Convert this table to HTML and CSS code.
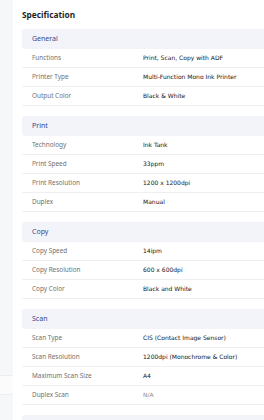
FILE: index.html
```html
<!DOCTYPE html>
<html><head>
<meta charset="utf-8"><link rel="stylesheet" href="styles.css">
</head><body><div class="page">
	<div class="side">
		<div class="side_card"></div>
	</div>
	<div class="spec_wrap">
		<div class="headline">Specification</div>

		<div class="spec_group">
			<div class="ghead">General</div>
			<div class="row"><span class="label">Functions</span><span class="value">Print, Scan, Copy with ADF</span></div>
			<div class="row"><span class="label">Printer Type</span><span class="value">Multi-Function Mono Ink Printer</span></div>
			<div class="row"><span class="label">Output Color</span><span class="value">Black &amp; White</span></div>
		</div>

		<div class="spec_group">
			<div class="ghead">Print</div>
			<div class="row"><span class="label">Technology</span><span class="value">Ink Tank</span></div>
			<div class="row"><span class="label">Print Speed</span><span class="value">33ppm</span></div>
			<div class="row"><span class="label">Print Resolution</span><span class="value">1200 x 1200dpi</span></div>
			<div class="row"><span class="label">Duplex</span><span class="value">Manual</span></div>
		</div>

		<div class="spec_group">
			<div class="ghead">Copy</div>
			<div class="row"><span class="label">Copy Speed</span><span class="value">14ipm</span></div>
			<div class="row"><span class="label">Copy Resolution</span><span class="value">600 x 600dpi</span></div>
			<div class="row"><span class="label">Copy Color</span><span class="value">Black and White</span></div>
		</div>

		<div class="spec_group">
			<div class="ghead">Scan</div>
			<div class="row"><span class="label">Scan Type</span><span class="value">CIS (Contact Image Sensor)</span></div>
			<div class="row"><span class="label">Scan Resolution</span><span class="value">1200dpi (Monochrome &amp; Color)</span></div>
			<div class="row"><span class="label">Maximum Scan Size</span><span class="value">A4</span></div>
			<div class="row"><span class="label">Duplex Scan</span><span class="value muted">N/A</span></div>
		</div>

		<div class="spec_group">
			<div class="ghead"></div>
		</div>
	</div>
</div></body></html>
```

FILE: styles.css
```css
html,body{margin: 0;padding: 0;}
body{background: #f6f7f9;font-family: "Noto Sans", "Open Sans", sans-serif;overflow: hidden;}
.page{display: flex;height: 420px;}
.side{width: 13px;flex: none;padding-top: 375px;}
.side_card{height: 18px;background: #fbfbfc;border-top: 1px solid #eceef2;border-bottom: 1px solid #eceef2;}
.spec_wrap{flex: 1;background: #fff;padding: 8px 0 0 9px;}
.spec_wrap .headline{font-size: 8.3px;font-weight: 700;color: #1f1f1f;height: 14px;line-height: 14px;margin-bottom: 7px;}
.spec_group{margin-bottom: 10px;}
.spec_group .ghead{height: 20px;line-height: 20px;padding-left: 10px;background: #f2f4fa;border-radius: 3px 0 0 3px;font-size: 7px;color: #38468a;}
.spec_group .row{display: grid;grid-template-columns: 121px 1fr;height: 18px;line-height: 18px;border-bottom: 1px solid #eeeff1;}
.spec_group .label{padding-left: 10px;font-size: 6.4px;color: #707070;white-space: nowrap;}
.spec_group .value{font-family: "DejaVu Sans", Verdana, sans-serif;font-size: 6px;color: #151515;white-space: nowrap;}
.spec_group .value.muted{color: #8a8a8a;}
```
